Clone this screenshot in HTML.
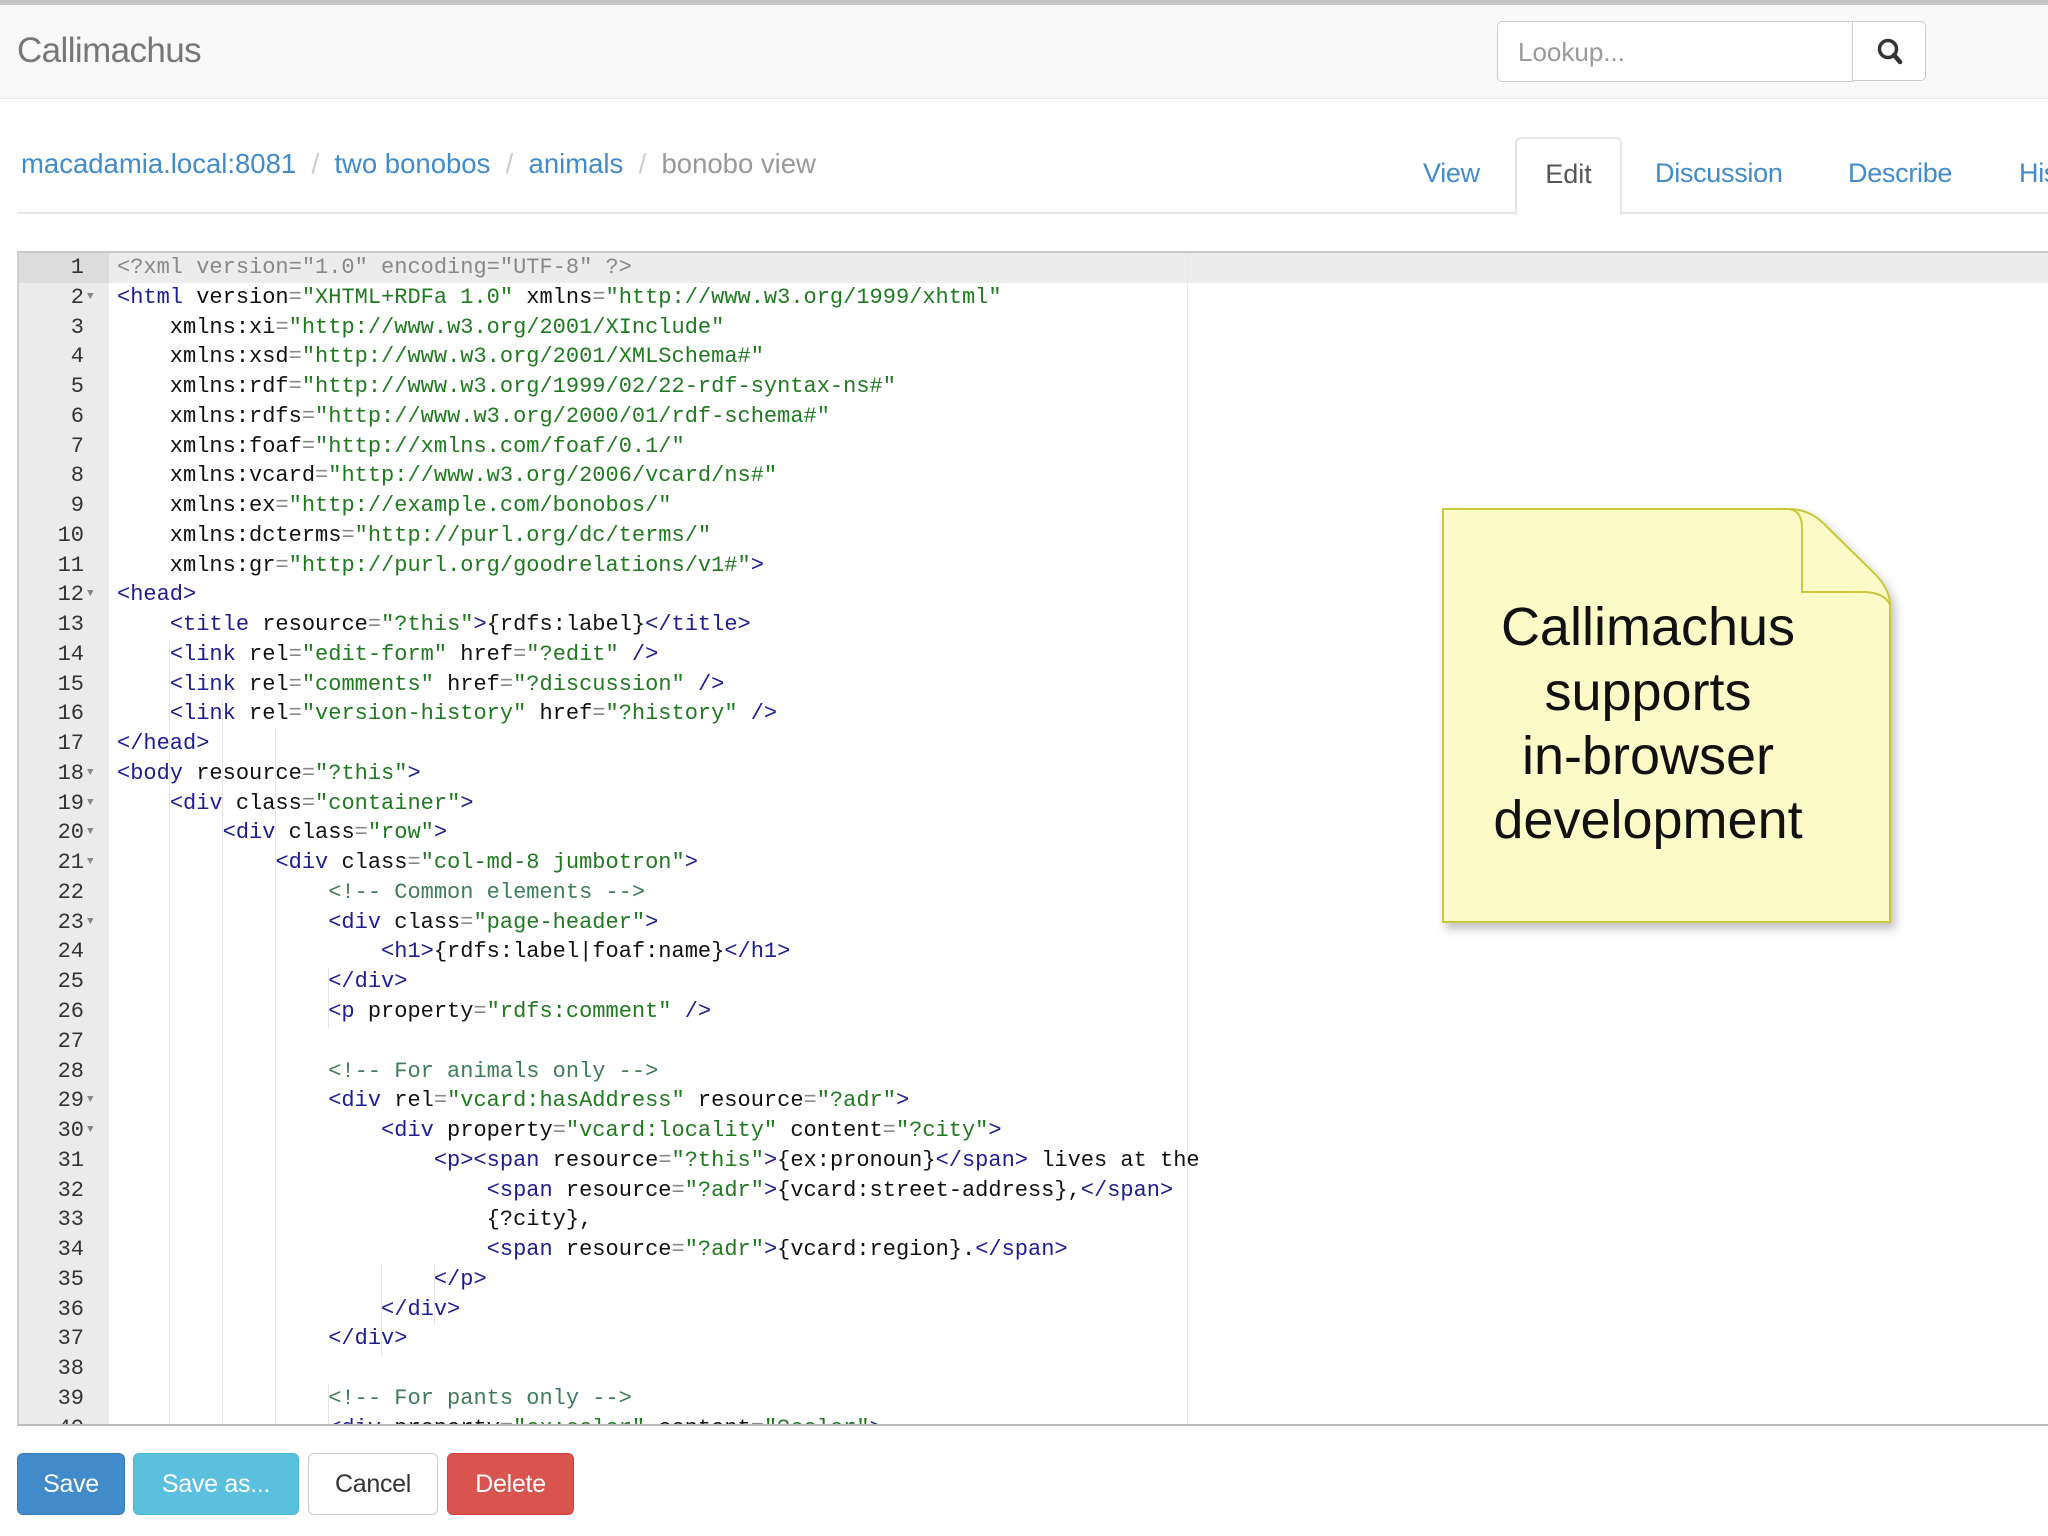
<!DOCTYPE html>
<html><head><meta charset="utf-8"><style>
*{margin:0;padding:0;box-sizing:border-box}
body{width:2048px;height:1536px;overflow:hidden;background:#fff;font-family:"Liberation Sans",sans-serif;position:relative}
.abs{position:absolute}
#top{left:0;top:0;width:2048px;height:5px;background:#c4c4c4}
#nav{left:0;top:5px;width:2048px;height:94px;background:#f8f8f8;border-bottom:1px solid #e7e7e7}
#brand{left:17px;top:31px;font-size:35px;color:#777;letter-spacing:-0.6px}
#lookup{left:1497px;top:21px;width:356px;height:61px;border:1px solid #ccc;border-radius:5px 0 0 5px;background:#fff;font-size:26px;color:#999;padding:15px 0 0 20px}
#lbtn{left:1852px;top:21px;width:74px;height:60px;border:1px solid #ccc;border-radius:0 5px 5px 0;background:#fff}
#crumb{left:21px;top:148px;font-size:27.5px;color:#428bca;white-space:pre;letter-spacing:0}
#crumb .sep{color:#ccc}
#crumb .act{color:#999}
#hline{left:17px;top:212px;width:2031px;height:2px;background:#e6e6e6}
.tab{top:158px;font-size:27px;color:#428bca;letter-spacing:-0.3px}
#edit{left:1515px;top:137px;width:107px;height:78px;background:#fff;border:2px solid #e6e6e6;border-bottom:none;border-radius:6px 6px 0 0;color:#555;font-size:27px;text-align:center;padding-top:20px}
#editor{left:17px;top:251px;width:2031px;height:1175px;border-top:2px solid #c8c8c8;border-left:2px solid #d0d0d0;border-bottom:2px solid #bbb;overflow:hidden;background:#fff}
#gutter{position:absolute;left:0;top:0;width:90px;height:100%;background:#ebebeb}
#margin{position:absolute;left:1168px;top:0;width:1px;height:100%;background:#e8e8e8}
#active{position:absolute;left:0;top:0;width:100%;height:30px;background:#ececec}
#activeg{position:absolute;left:0;top:0;width:90px;height:30px;background:#dcdcdc}
.ln{position:absolute;left:0;height:29.76px;line-height:29.76px;font-family:"Liberation Mono",monospace;font-size:22px;white-space:pre;color:#111}
.num{position:absolute;left:0;width:65px;text-align:right;color:#333}
.fold{position:absolute;left:68px;font-size:11px;color:#888}
.code{position:absolute;left:98px}
.t{color:#1c1c94}.s{color:#1f7a1f}.c{color:#3e7d57}.e{color:#888}
.guide{position:absolute;width:1px;background:#e4e4e4}
.btn{top:1453px;height:62px;border-radius:6px;font-size:25px;color:#fff;text-align:center;padding-top:16px;letter-spacing:-0.3px}
</style></head><body>
<div id="top" class="abs"></div>
<div id="nav" class="abs"></div>
<div id="brand" class="abs">Callimachus</div>
<div id="lookup" class="abs">Lookup...</div>
<div id="lbtn" class="abs"><svg width="74" height="60" viewBox="0 0 74 60"><circle cx="35" cy="27" r="8.5" fill="none" stroke="#333" stroke-width="3.5"/><line x1="41" y1="33" x2="47" y2="40" stroke="#333" stroke-width="4.5" stroke-linecap="round"/></svg></div>

<div id="crumb" class="abs">macadamia.local:8081<span class="sep">  /  </span>two bonobos<span class="sep">  /  </span>animals<span class="sep">  /  </span><span class="act">bonobo view</span></div>
<div id="hline" class="abs"></div>
<div class="abs tab" style="left:1423px">View</div>
<div id="edit" class="abs">Edit</div>
<div class="abs tab" style="left:1655px">Discussion</div>
<div class="abs tab" style="left:1848px">Describe</div>
<div class="abs tab" style="left:2019px">History</div>

<div id="editor" class="abs">
<div id="gutter"></div>
<div id="active"></div><div id="activeg"></div>
<div id="margin"></div>
<div class="guide" style="left:150px;top:387px;height:790px"></div>
<div class="guide" style="left:203px;top:447px;height:730px"></div>
<div class="guide" style="left:256px;top:476px;height:700px"></div>
<div class="guide" style="left:309px;top:715px;height:60px"></div>
<div class="guide" style="left:309px;top:1131px;height:60px"></div>
<div class="guide" style="left:362px;top:1012px;height:90px"></div>
<div class="guide" style="left:415px;top:1012px;height:60px"></div>
<div id="lines"></div>
</div>

<svg class="abs" style="left:1430px;top:500px" width="480" height="440" viewBox="1430 500 480 440">
<defs><filter id="sh" x="-10%" y="-10%" width="130%" height="130%"><feDropShadow dx="4" dy="6" stdDeviation="5" flood-color="#000" flood-opacity="0.25"/></filter></defs>
<path d="M1443 509 L1788 509 Q1808 509 1822 522 L1876 575 Q1890 590 1890 605 L1890 922 L1443 922 Z" fill="#fbfbc8" stroke="#c8c83a" stroke-width="2" filter="url(#sh)"/>
<path d="M1788 509 Q1802 510 1802 528 L1802 592 L1865 592 Q1885 593 1890 605" fill="none" stroke="#c8c83a" stroke-width="2"/>
<text font-family="Liberation Sans, sans-serif" font-size="54" text-anchor="middle" fill="#111"><tspan x="1648" y="645">Callimachus</tspan><tspan x="1648" y="710">supports</tspan><tspan x="1648" y="774">in-browser</tspan><tspan x="1648" y="838">development</tspan></text>
</svg>

<div class="abs btn" style="left:17px;width:108px;background:#428bca;border:1px solid #357ebd">Save</div>
<div class="abs btn" style="left:133px;width:166px;background:#5bc0de;border:1px solid #46b8da">Save as...</div>
<div class="abs btn" style="left:308px;width:130px;background:#fff;border:1px solid #ccc;color:#333">Cancel</div>
<div class="abs btn" style="left:447px;width:127px;background:#d9534f;border:1px solid #d43f3a">Delete</div>

<script>
const L=[
['','<span class="e">&lt;?xml version="1.0" encoding="UTF-8" ?&gt;</span>'],
['f','<span class="t">&lt;html</span> version<span class="e">=</span><span class="s">"XHTML+RDFa 1.0"</span> xmlns<span class="e">=</span><span class="s">"http://www.w3.org/1999/xhtml"</span>'],
['','    xmlns:xi<span class="e">=</span><span class="s">"http://www.w3.org/2001/XInclude"</span>'],
['','    xmlns:xsd<span class="e">=</span><span class="s">"http://www.w3.org/2001/XMLSchema#"</span>'],
['','    xmlns:rdf<span class="e">=</span><span class="s">"http://www.w3.org/1999/02/22-rdf-syntax-ns#"</span>'],
['','    xmlns:rdfs<span class="e">=</span><span class="s">"http://www.w3.org/2000/01/rdf-schema#"</span>'],
['','    xmlns:foaf<span class="e">=</span><span class="s">"http://xmlns.com/foaf/0.1/"</span>'],
['','    xmlns:vcard<span class="e">=</span><span class="s">"http://www.w3.org/2006/vcard/ns#"</span>'],
['','    xmlns:ex<span class="e">=</span><span class="s">"http://example.com/bonobos/"</span>'],
['','    xmlns:dcterms<span class="e">=</span><span class="s">"http://purl.org/dc/terms/"</span>'],
['','    xmlns:gr<span class="e">=</span><span class="s">"http://purl.org/goodrelations/v1#"</span><span class="t">&gt;</span>'],
['f','<span class="t">&lt;head&gt;</span>'],
['','    <span class="t">&lt;title</span> resource<span class="e">=</span><span class="s">"?this"</span><span class="t">&gt;</span>{rdfs:label}<span class="t">&lt;/title&gt;</span>'],
['','    <span class="t">&lt;link</span> rel<span class="e">=</span><span class="s">"edit-form"</span> href<span class="e">=</span><span class="s">"?edit"</span> <span class="t">/&gt;</span>'],
['','    <span class="t">&lt;link</span> rel<span class="e">=</span><span class="s">"comments"</span> href<span class="e">=</span><span class="s">"?discussion"</span> <span class="t">/&gt;</span>'],
['','    <span class="t">&lt;link</span> rel<span class="e">=</span><span class="s">"version-history"</span> href<span class="e">=</span><span class="s">"?history"</span> <span class="t">/&gt;</span>'],
['','<span class="t">&lt;/head&gt;</span>'],
['f','<span class="t">&lt;body</span> resource<span class="e">=</span><span class="s">"?this"</span><span class="t">&gt;</span>'],
['f','    <span class="t">&lt;div</span> class<span class="e">=</span><span class="s">"container"</span><span class="t">&gt;</span>'],
['f','        <span class="t">&lt;div</span> class<span class="e">=</span><span class="s">"row"</span><span class="t">&gt;</span>'],
['f','            <span class="t">&lt;div</span> class<span class="e">=</span><span class="s">"col-md-8 jumbotron"</span><span class="t">&gt;</span>'],
['','                <span class="c">&lt;!-- Common elements --&gt;</span>'],
['f','                <span class="t">&lt;div</span> class<span class="e">=</span><span class="s">"page-header"</span><span class="t">&gt;</span>'],
['','                    <span class="t">&lt;h1&gt;</span>{rdfs:label|foaf:name}<span class="t">&lt;/h1&gt;</span>'],
['','                <span class="t">&lt;/div&gt;</span>'],
['','                <span class="t">&lt;p</span> property<span class="e">=</span><span class="s">"rdfs:comment"</span> <span class="t">/&gt;</span>'],
['',''],
['','                <span class="c">&lt;!-- For animals only --&gt;</span>'],
['f','                <span class="t">&lt;div</span> rel<span class="e">=</span><span class="s">"vcard:hasAddress"</span> resource<span class="e">=</span><span class="s">"?adr"</span><span class="t">&gt;</span>'],
['f','                    <span class="t">&lt;div</span> property<span class="e">=</span><span class="s">"vcard:locality"</span> content<span class="e">=</span><span class="s">"?city"</span><span class="t">&gt;</span>'],
['','                        <span class="t">&lt;p&gt;&lt;span</span> resource<span class="e">=</span><span class="s">"?this"</span><span class="t">&gt;</span>{ex:pronoun}<span class="t">&lt;/span&gt;</span> lives at the'],
['','                            <span class="t">&lt;span</span> resource<span class="e">=</span><span class="s">"?adr"</span><span class="t">&gt;</span>{vcard:street-address},<span class="t">&lt;/span&gt;</span>'],
['','                            {?city},'],
['','                            <span class="t">&lt;span</span> resource<span class="e">=</span><span class="s">"?adr"</span><span class="t">&gt;</span>{vcard:region}.<span class="t">&lt;/span&gt;</span>'],
['','                        <span class="t">&lt;/p&gt;</span>'],
['','                    <span class="t">&lt;/div&gt;</span>'],
['','                <span class="t">&lt;/div&gt;</span>'],
['',''],
['','                <span class="c">&lt;!-- For pants only --&gt;</span>'],
['','                <span class="t">&lt;div</span> property<span class="e">=</span><span class="s">"ex:color"</span> content<span class="e">=</span><span class="s">"?color"</span><span class="t">&gt;</span>']
];
let h='';
L.forEach((l,i)=>{h+='<div class="ln" style="top:'+(i*29.76)+'px;width:2000px"><span class="num">'+(i+1)+'</span>'+(l[0]?'<span class="fold">&#9660;</span>':'')+'<span class="code">'+l[1]+'</span></div>';});
document.getElementById('lines').innerHTML=h;
</script>
</body></html>
